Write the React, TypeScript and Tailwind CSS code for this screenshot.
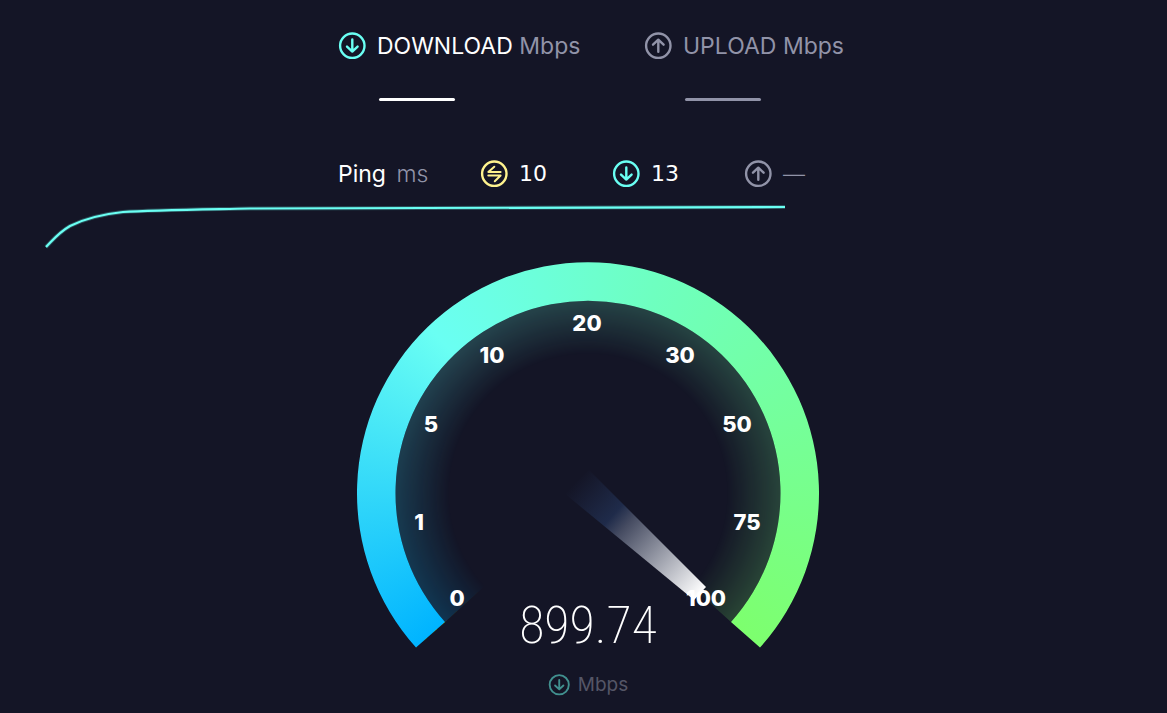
import React from 'react';

type IconProps = { className?: string };

const TICKS = [
  { label: '0', x: 100, y: 336 },
  { label: '1', x: 62, y: 260 },
  { label: '5', x: 74, y: 162 },
  { label: '10', x: 135, y: 93 },
  { label: '20', x: 230, y: 61 },
  { label: '30', x: 323, y: 93 },
  { label: '50', x: 380, y: 162 },
  { label: '75', x: 390, y: 260 },
  { label: '100', x: 349, y: 336 },
];

const DownIcon = ({ className }: IconProps) => (
  <svg viewBox="0 0 28 28" className={className} fill="none" stroke="currentColor" strokeWidth="2.4" aria-hidden="true">
    <circle cx="14.3" cy="13.7" r="12.2" />
    <path d="M14.3 7.5v12M9 14.600 14.300 19.600l5.300-5" strokeLinecap="round" strokeLinejoin="round" />
  </svg>
);

const UpIcon = ({ className }: IconProps) => (
  <svg viewBox="0 0 28 28" className={className} fill="none" stroke="currentColor" strokeWidth="2.4" aria-hidden="true">
    <circle cx="14.3" cy="13.7" r="12.2" />
    <path d="M14.3 19.700V7.700M9 12.700 14.300 7.700l5.300 5" strokeLinecap="round" strokeLinejoin="round" />
  </svg>
);

const IdleIcon = ({ className }: IconProps) => (
  <svg viewBox="0 0 28 28" className={className} fill="none" stroke="currentColor" strokeWidth="2" aria-hidden="true">
    <circle cx="14.3" cy="13.7" r="12.2" strokeWidth="2.4" />
    <path d="M14.300 6.700 8.300 11.900h12.300M8.300 15.500h12.300L14.800 21.200" strokeLinecap="round" strokeLinejoin="round" />
  </svg>
);

const Gauge = () => (
  <svg viewBox="0 0 462 388" className="block w-full" role="img" aria-label="Speed gauge">
    <defs>
      <clipPath id="ring">
        <path d="M59 385.5A231 231 0 1 1 403 385.5L374 360A192.500 192.500 0 1 0 88 360Z" />
      </clipPath>
      <clipPath id="inner">
        <path d="M88 360A192.500 192.500 0 1 1 374 360L231 231Z" />
      </clipPath>
      <linearGradient id="needle" gradientUnits="userSpaceOnUse" x1="219" y1="219" x2="344" y2="331">
        <stop offset="0" stopColor="#1f2b4a" stopOpacity="0" />
        <stop offset="0.3" stopColor="#1f2b4a" />
        <stop offset="0.4" stopColor="#454b61" />
        <stop offset="1" stopColor="#ffffff" />
      </linearGradient>
    </defs>
    <foreignObject width="462" height="388" clipPath="url(#inner)">
      <div className="h-[462px] w-[462px] bg-[conic-gradient(from_228deg,#00b4ff_0deg,#6afff3_88deg,#6effc0_150deg,#7dff6e_264deg)] opacity-20 [mask-image:radial-gradient(circle,transparent_138px,black_193px)]" />
    </foreignObject>
    <foreignObject width="462" height="388" clipPath="url(#ring)">
      <div className="h-[462px] w-[462px] bg-[conic-gradient(from_228deg,#00b4ff_0deg,#6afff3_88deg,#6effc0_150deg,#7dff6e_264deg)]" />
    </foreignObject>
    <path d="M207 231 232 208 349 325 337 338Z" fill="url(#needle)" />
    <g className="fill-white font-['Inter',sans-serif] text-[22px] font-extrabold" textAnchor="middle">
      {TICKS.map(({ label, x, y }) => (
        <text key={label} x={x} y={y + 8}>
          {label}
        </text>
      ))}
    </g>
  </svg>
);

export default function App() {
  return (
    <main className="min-h-screen bg-[#141526] pt-8 font-['Inter',sans-serif] text-[23px] leading-7 text-white">
      <div className="pl-[9px]">
        <div className="mx-auto max-w-[500px]">
          <div className="grid grid-cols-[306px_auto]">
            <section>
              <h2 className="flex items-center gap-[11px] whitespace-nowrap">
                <DownIcon className="size-7 text-[#6afff3]" />
                <span>
                  DOWNLOAD <span className="text-[#9193a8]">Mbps</span>
                </span>
              </h2>
              <div className="mt-[38px] ml-[41px] h-[3px] w-[76px] rounded-xs bg-white" />
            </section>
            <section className="text-[#9193a8]">
              <h2 className="flex items-center gap-[11px] whitespace-nowrap">
                <UpIcon className="size-7" />
                <span>UPLOAD Mbps</span>
              </h2>
              <div className="mt-[38px] ml-[41px] h-[3px] w-[76px] rounded-xs bg-[#9193a8]" />
            </section>
          </div>

          <div className="mt-[59px] grid grid-cols-[142px_132px_132px_auto] items-center">
            <div>
              Ping <span className="ml-1 font-light text-[#9193a8]">ms</span>
            </div>
            <div className="flex items-center gap-[11px]">
              <IdleIcon className="size-7 text-[#fff38e]" />
              <span className="font-['DejaVu_Sans',sans-serif] text-[22px]">10</span>
            </div>
            <div className="flex items-center gap-[11px]">
              <DownIcon className="size-7 text-[#6afff3]" />
              <span className="font-['DejaVu_Sans',sans-serif] text-[22px]">13</span>
            </div>
            <div className="flex items-center gap-[11px] text-[#9193a8]">
              <UpIcon className="size-7" />
              <span className="text-[22px] font-light">—</span>
            </div>
          </div>
        </div>
      </div>

      <svg viewBox="0 0 750 56" className="mt-3 ml-10 block w-[750px] max-w-full" fill="none" aria-hidden="true">
        <path
          d="M6 47C13 40 18 33 30 26C46 18 64 14 83 12C112 10 160 9.500 210 8.500C340 7 520 7 745 7"
          stroke="#6afff3"
          strokeOpacity="0.25"
          strokeWidth="4"
        />
        <path
          d="M6 47C13 40 18 33 30 26C46 18 64 14 83 12C112 10 160 9.500 210 8.500C340 7 520 7 745 7"
          stroke="#6afff3"
          strokeWidth="2.2"
        />
      </svg>

      <div className="mt-[6px] pl-[9px]">
        <div className="relative mx-auto max-w-[462px]">
          <Gauge />
          <div className="absolute inset-x-0 bottom-0 text-center font-['Roboto_Condensed','Roboto',sans-serif] text-[52px] leading-[48px] font-extralight">
            899.74
          </div>
        </div>
        <div className="mt-[21px] flex items-center justify-center gap-2 text-[19px] leading-7 text-[#555666]">
          <DownIcon className="size-[22px] text-[#41908f]" />
          <span>Mbps</span>
        </div>
      </div>
    </main>
  );
}
